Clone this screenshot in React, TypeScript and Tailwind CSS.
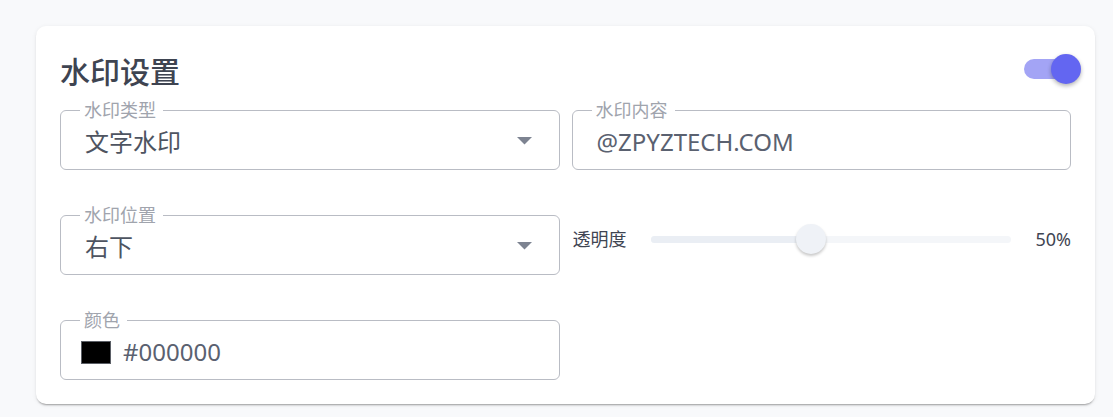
import { useState } from "react";

const labelCls =
  "absolute -top-[12px] left-[19px] bg-white pl-[4px] pr-[7px] text-[18px] leading-[22px] text-[#a0a4ad]";
const fieldBase =
  "relative flex h-[60px] items-center rounded-[6px] border border-[#b9bcc4] pt-[4px]";
const fieldCls = `${fieldBase} pl-[24px] pr-[27px]`;

function Legend({ children }: { children: string }) {
  return <span className={labelCls}>{children}</span>;
}

function SelectField({ label, value }: { label: string; value: string }) {
  return (
    <div className={fieldCls}>
      <Legend>{label}</Legend>
      <span className="flex-1 text-[24px] leading-[30px] text-[#4e5461]">{value}</span>
      <svg width="15" height="8" viewBox="0 0 15 8" className="mt-[-2px]">
        <polygon points="0,0 15,0 7.5,7.5" fill="#7d8391" />
      </svg>
    </div>
  );
}

export default function App() {
  const [enabled, setEnabled] = useState(true);
  const opacity = 50;

  return (
    <div className="min-h-screen bg-[#f8f9fb] pl-[36px] pr-[18px] pt-[26px] font-[Noto_Sans,Noto_Sans_CJK_SC,sans-serif]">
      <div className="rounded-[10px] bg-white px-[24px] pb-[24px] pt-[24px] shadow-[0_2px_2px_-1px_rgba(0,0,0,0.35),0_1px_5px_rgba(0,0,0,0.07)]">
        {/* header */}
        <div className="mb-[16px] flex h-[44px] items-center justify-between">
          <h2 className="text-[30px] font-medium leading-[36px] text-[#3e4451]">水印设置</h2>
          <button
            onClick={() => setEnabled(!enabled)}
            className="relative -mr-[10px] mb-[6px] h-[30px] w-[57px]"
            aria-label="toggle watermark"
          >
            <span
              className={`absolute left-0 top-[5px] h-[20px] w-[48px] rounded-full ${enabled ? "bg-[#a3a4f5]" : "bg-gray-300"}`}
            />
            <span
              className={`absolute top-0 h-[30px] w-[30px] rounded-full shadow-[0_2px_4px_rgba(0,0,0,0.3)] ${enabled ? "right-0 bg-[#6366f1]" : "left-0 bg-white"}`}
            />
          </button>
        </div>

        <div className="grid grid-cols-2 gap-x-[12px] gap-y-[45px]">
          <SelectField label="水印类型" value="文字水印" />

          <div className={fieldCls}>
            <Legend>水印内容</Legend>
            <span className="text-[24px] leading-[30px] text-[#5a6170]">@ZPYZTECH.COM</span>
          </div>

          <SelectField label="水印位置" value="右下" />

          <div className="flex h-[48px] items-center gap-[24px] pl-[1px]">
            <span className="shrink-0 text-[18px] text-[#3f4552]">透明度</span>
            <div className="relative h-[7px] flex-1 rounded-full bg-[#f4f6f9]">
              <div className="h-full w-[44.6%] rounded-full bg-[#eaeef4]" />
              <div className="absolute left-[44.6%] top-1/2 h-[30px] w-[30px] -translate-x-1/2 -translate-y-1/2 rounded-full bg-[#eff2f7] shadow-[0_2px_3px_rgba(0,0,0,0.22)]" />
            </div>
            <span className="shrink-0 text-[18px] text-[#3f4552]">{opacity}%</span>
          </div>

          <div className={`${fieldBase} pl-[20px] pr-[27px]`}>
            <Legend>颜色</Legend>
            <span className="h-[23px] w-[30px] border border-[#5b5f66] bg-black" />
            <span className="ml-[12px] text-[24px] leading-[30px] text-[#5a6170]">#000000</span>
          </div>
        </div>
      </div>
    </div>
  );
}
